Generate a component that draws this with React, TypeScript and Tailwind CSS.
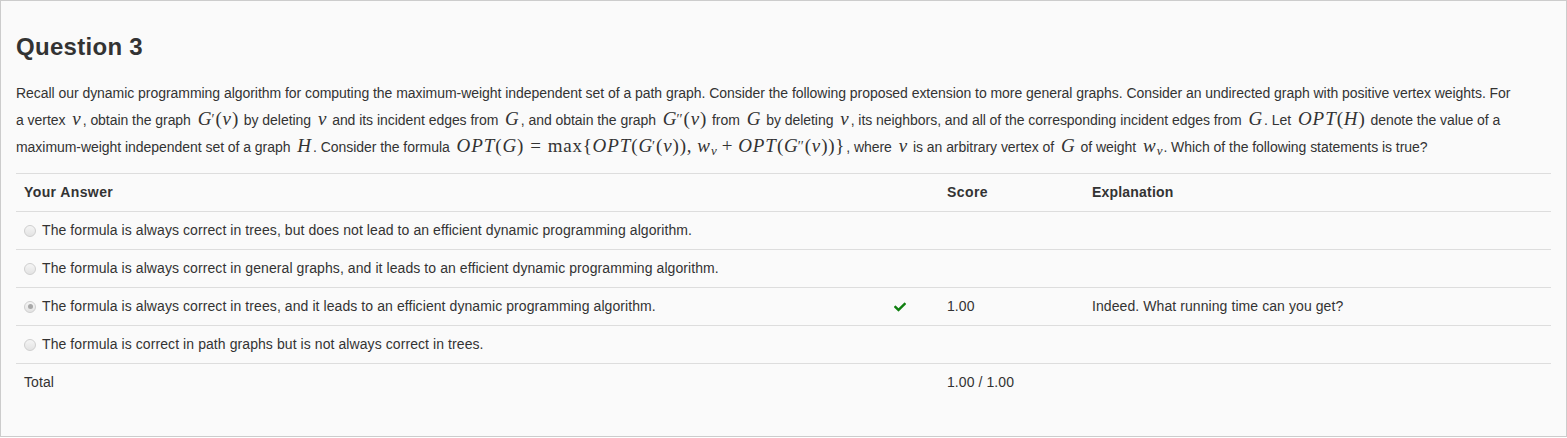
import { FaCheck } from "react-icons/fa";
import type { ReactNode } from "react";

const serif = "font-['Liberation_Serif','DejaVu_Serif',serif]";

// inline math group, with a little room in front like the MathJax spans
function M({ children }: { children: ReactNode }) {
  return <span className="ml-[3px] mr-[1px] whitespace-nowrap">{children}</span>;
}

function V({ children }: { children: ReactNode }) {
  return <i className={`${serif} text-[19px] tracking-[0.05em] leading-none`}>{children}</i>;
}

function R({ children }: { children: ReactNode }) {
  return <span className={`${serif} text-[19px] tracking-[0.04em] leading-none`}>{children}</span>;
}

function Prime({ n = 1 }: { n?: number }) {
  return (
    <sup className={`${serif} text-[14px] leading-none relative -top-[1px] -ml-[1px] mr-[1px]`}>
      {n === 2 ? "′′" : "′"}
    </sup>
  );
}

function Wv() {
  return (
    <>
      <V>w</V>
      <sub className={`${serif} italic text-[13px] leading-none`}>v</sub>
    </>
  );
}

function Gv({ n }: { n: number }) {
  return (
    <>
      <V>G</V>
      <Prime n={n} />
      <R>(</R>
      <V>v</V>
      <R>)</R>
    </>
  );
}

function Radio({ checked = false }: { checked?: boolean }) {
  return (
    <span className="w-[12px] h-[12px] mr-[6px] shrink-0 rounded-full border border-[#cfcfcf] bg-gradient-to-b from-[#f5f5f5] to-[#e3e3e3] flex items-center justify-center">
      {checked && <span className="w-[5px] h-[5px] rounded-full bg-[#a8a8a8]" />}
    </span>
  );
}

const answers = [
  { text: "The formula is always correct in trees, but does not lead to an efficient dynamic programming algorithm." },
  { text: "The formula is always correct in general graphs, and it leads to an efficient dynamic programming algorithm." },
  {
    text: "The formula is always correct in trees, and it leads to an efficient dynamic programming algorithm.",
    chosen: true,
    score: "1.00",
    explanation: "Indeed. What running time can you get?",
  },
  { text: "The formula is correct in path graphs but is not always correct in trees." },
];

const row = "grid grid-cols-[875px_48px_145px_1fr] h-[38px] items-center border-t border-[#ddd]";

export default function App() {
  return (
    <div className="h-[437px] border border-[#cccccc] bg-[#fafafa] px-[15px] pt-[33px] text-[#333] font-['Liberation_Sans',Arial,sans-serif]">
      <h2 className="text-[24px] font-bold leading-[26px] tracking-[0.3px] mb-[20px]">Question 3</h2>

      <p className="text-[14px] leading-[27px] tracking-[-0.045px] whitespace-nowrap">
        Recall our dynamic programming algorithm for computing the maximum-weight independent set of a path graph. Consider the following proposed extension to more general graphs. Consider an undirected graph with positive vertex weights. For
        <br />
        a vertex <M><V>v</V></M>, obtain the graph <M><Gv n={1} /></M> by deleting <M><V>v</V></M> and its incident edges from{" "}
        <M><V>G</V></M>, and obtain the graph <M><Gv n={2} /></M> from <M><V>G</V></M> by deleting <M><V>v</V></M>, its
        neighbors, and all of the corresponding incident edges from <M><V>G</V></M>. Let{" "}
        <M>
          <V>OPT</V>
          <R>(</R>
          <V>H</V>
          <R>)</R>
        </M>{" "}
        denote the value of a
        <br />
        maximum-weight independent set of a graph <M><V>H</V></M>. Consider the formula{" "}
        <M>
          <V>OPT</V>
          <R>(</R>
          <V>G</V>
          <R>)</R>
          <R>
            <span className="px-[6px]">=</span>max{"{"}
          </R>
          <V>OPT</V>
          <R>(</R>
          <Gv n={1} />
          <R>),</R>
          <span className="inline-block w-[5px]" />
          <Wv />
          <R>
            <span className="px-[5px]">+</span>
          </R>
          <V>OPT</V>
          <R>(</R>
          <Gv n={2} />
          <R>){"}"}</R>
        </M>
        , where <M><V>v</V></M> is an arbitrary vertex of <M><V>G</V></M> of weight <M><Wv /></M>. Which of the following
        statements is true?
      </p>

      <div className="mt-[12px] text-[14px] tracking-[0.08px]">
        <div className={row}>
          <div className="px-2 font-bold tracking-[0.4px]">Your Answer</div>
          <div />
          <div className="px-2 font-bold tracking-[0.4px]">Score</div>
          <div className="px-2 font-bold tracking-[0.2px]">Explanation</div>
        </div>
        {answers.map((a) => (
          <div key={a.text} className={row}>
            <div className="px-2 flex items-center">
              <Radio checked={a.chosen} />
              <span>{a.text}</span>
            </div>
            <div className="pl-[3px] flex items-center">
              {a.chosen && <FaCheck className="text-[#0f7f0f] w-[12px] h-[12px]" />}
            </div>
            <div className="px-2">{a.score}</div>
            <div className="px-2">{a.explanation}</div>
          </div>
        ))}
        <div className={row}>
          <div className="px-2">Total</div>
          <div />
          <div className="px-2">1.00 / 1.00</div>
          <div />
        </div>
      </div>
    </div>
  );
}
